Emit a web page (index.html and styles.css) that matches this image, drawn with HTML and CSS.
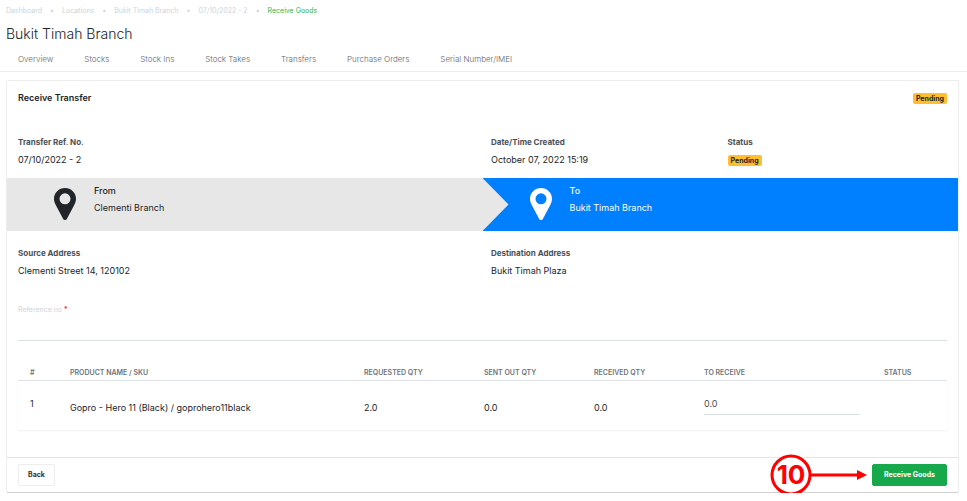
FILE: index.html
```
<!DOCTYPE html>
<html lang="en">
<head>
  <meta charset="UTF-8" />
  <meta name="viewport" content="width=device-width, initial-scale=1.0"/>
  <title>Receive Goods - Bukit Timah Branch</title>
  <link rel="stylesheet" href="styles.css">
</head>
<body>
  <header class="page-header">
    <nav class="breadcrumb" aria-label="Breadcrumb">
      <a href="#">Dashboard</a>
      <a href="#">Locations</a>
      <a href="#">Bukit Timah Branch</a>
      <a href="#">07/10/2022 - 2</a>
      <a href="#" class="active">Receive Goods</a>
    </nav>
    <h1>Bukit Timah Branch</h1>
    <nav class="tabs" aria-label="Location">
      <a href="#">Overview</a>
      <a href="#">Stocks</a>
      <a href="#">Stock Ins</a>
      <a href="#">Stock Takes</a>
      <a href="#">Transfers</a>
      <a href="#">Purchase Orders</a>
      <a href="#">Serial Number/IMEI</a>
    </nav>
  </header>

  <main class="card">
    <div class="card-header">
      <h2>Receive Transfer</h2>
      <span class="badge">Pending</span>
    </div>

    <!-- Transfer details -->
    <div class="details">
      <div class="field wide">
        <h3>Transfer Ref. No.</h3>
        <p>07/10/2022 - 2</p>
      </div>
      <div class="field">
        <h3>Date/Time Created</h3>
        <p>October 07, 2022 15:19</p>
      </div>
      <div class="field">
        <h3>Status</h3>
        <p><span class="badge">Pending</span></p>
      </div>
    </div>

    <!-- From / To banner -->
    <div class="route">
      <div class="stop from">
        <svg class="pin" viewBox="0 0 22 32" aria-hidden="true">
          <path fill="currentColor" fill-rule="evenodd" d="M11 0C4.900 0 0 4.800 0 10.800c0 2.500.8 4.500 2 6.700L9.300 31.200c.7 1.100 2.700 1.100 3.400 0L20 17.500c1.200-2.200 2-4.200 2-6.700C22 4.800 17.100 0 11 0zM11 5.300a5.500 5.500 0 1 1 0 11 5.500 5.500 0 0 1 0-11z"/>
        </svg>
        <div>
          <h3>From</h3>
          <p>Clementi Branch</p>
        </div>
      </div>
      <div class="stop to">
        <svg class="pin" viewBox="0 0 22 32" aria-hidden="true">
          <path fill="currentColor" fill-rule="evenodd" d="M11 0C4.900 0 0 4.800 0 10.800c0 2.500.8 4.500 2 6.700L9.300 31.200c.7 1.100 2.700 1.100 3.400 0L20 17.500c1.200-2.200 2-4.200 2-6.700C22 4.800 17.100 0 11 0zM11 5.300a5.500 5.500 0 1 1 0 11 5.500 5.500 0 0 1 0-11z"/>
        </svg>
        <div>
          <h3>To</h3>
          <p>Bukit Timah Branch</p>
        </div>
      </div>
    </div>

    <div class="details addresses">
      <div class="field wide">
        <h3>Source Address</h3>
        <p>Clementi Street 14, 120102</p>
      </div>
      <div class="field wide">
        <h3>Destination Address</h3>
        <p>Bukit Timah Plaza</p>
      </div>
    </div>

    <div class="reference">
      <label for="referenceNo">Reference no <span class="required">*</span></label>
      <input type="text" id="referenceNo" required />
    </div>

    <!-- Products -->
    <table class="products">
      <colgroup>
        <col class="col-index">
        <col class="col-name">
        <col class="col-requested">
        <col class="col-sent">
        <col class="col-received">
        <col class="col-receive">
        <col class="col-status">
      </colgroup>
      <thead>
        <tr>
          <th>#</th>
          <th>Product Name / SKU</th>
          <th>Requested Qty</th>
          <th>Sent Out Qty</th>
          <th>Received Qty</th>
          <th>To Receive</th>
          <th>Status</th>
        </tr>
      </thead>
      <tbody>
        <tr>
          <td class="top">1</td>
          <td>Gopro - Hero 11 (Black) / goprohero11black</td>
          <td>2.0</td>
          <td>0.0</td>
          <td>0.0</td>
          <td class="top"><input type="text" value="0.0" aria-label="To receive" /></td>
          <td></td>
        </tr>
      </tbody>
    </table>

    <div class="card-footer">
      <button type="button" class="btn btn-back">Back</button>
      <div class="submit">
        <svg class="callout" viewBox="0 0 98 42" role="img" aria-label="Step 10">
          <circle cx="21" cy="21" r="19" fill="#fff" stroke="#f00" stroke-width="3"/>
          <text class="callout-text" x="21" y="30" text-anchor="middle">10</text>
          <path d="M41 21h46" stroke="#f00" stroke-width="3"/>
          <path d="M87 16l10 5-10 5z" fill="#f00"/>
        </svg>
        <button type="submit" class="btn btn-success">Receive Goods</button>
      </div>
    </div>
  </main>
</body>
</html>
```
FILE: styles.css
```
* {
  box-sizing: border-box;
}
body {
  font-family: Inter, 'Liberation Sans', sans-serif;
  font-size: 9px;
  line-height: 14px;
  margin: 0;
  color: #212529;
  background-color: #fff;
}
h1, h2, h3, p {
  margin: 0;
}
a {
  text-decoration: none;
}
input {
  font: inherit;
  color: #495057;
  display: block;
  width: 100%;
  border: none;
  border-bottom: 1px solid #dadfe3;
  border-radius: 0;
  background: none;
  padding: 0;
}
.page-header {
  border-bottom: 1px solid #ededed;
}
.breadcrumb {
  display: flex;
  padding: 4px 6px 0;
  font-size: 7px;
}
.breadcrumb a {
  color: #ced4da;
}
.breadcrumb a + a::before {
  content: "•";
  margin: 0 8px;
  color: #ced4da;
}
.breadcrumb .active {
  color: #28b858;
}
h1 {
  padding: 6px 6px 0;
  font-size: 14px;
  line-height: 20px;
  font-weight: 300;
}
.tabs {
  display: flex;
  gap: 31px;
  padding: 8px 18px 5px;
  font-size: 8px;
  font-weight: 300;
}
.tabs a {
  color: #5c656d;
}
.card {
  margin: 8px 8px 0 6px;
  border: 1px solid #ededed;
  border-bottom: 1px solid #d0d0d0;
  border-radius: 2px;
}
.card-header {
  display: flex;
  justify-content: space-between;
  align-items: center;
  padding: 10px 11px 0;
}
h2 {
  font-size: 9px;
  font-weight: 600;
}
.badge {
  display: block;
  width: max-content;
  padding: 0 3px;
  font-size: 7px;
  line-height: 11px;
  font-weight: 700;
  background-color: #ffbe2e;
  border-radius: 2px;
}
.details {
  display: grid;
  grid-template-columns: repeat(4, 1fr);
  gap: 17px;
  padding: 30px 11px 11px;
}
.wide {
  grid-column: span 2;
}
.field h3 {
  font-size: 8px;
  font-weight: 700;
  color: #495057;
}
.field p {
  margin-top: 4px;
}
.field .badge {
  margin-top: 6px;
}
.route {
  display: flex;
  background-color: #e7e7e7;
}
.stop {
  flex: 1;
  display: flex;
  gap: 18px;
  padding: 6px 0 9px 47px;
}
.stop h3 {
  font-size: 9px;
  font-weight: 500;
}
.stop p {
  margin-top: 3px;
  padding-bottom: 7px;
}
.pin {
  width: 22px;
  height: 32px;
  margin-top: 4px;
}
.to {
  color: #fff;
  background-color: #007fff;
  clip-path: polygon(0 0, 100% 0, 100% 100%, 0 100%, 26px 50%);
}
.addresses {
  padding: 15px 11px 0;
}
.reference {
  margin: 25px 11px 0;
}
.reference label {
  display: block;
  font-size: 7px;
  color: #ced4da;
}
.reference input {
  height: 24px;
}
.required {
  color: #f00;
}
.products {
  width: calc(100% - 22px);
  margin: 23px 11px 27px;
  table-layout: fixed;
  border-collapse: collapse;
}
.col-index { width: 40px; }
.col-requested { width: 120px; }
.col-sent { width: 110px; }
.col-received { width: 110px; }
.col-receive { width: 180px; }
.col-status { width: 75px; }
.products th {
  padding: 2px 12px 0;
  font-size: 7px;
  font-weight: 600;
  text-align: left;
  text-transform: uppercase;
  color: #6c757d;
  border-bottom: 1px solid #dee2e6;
}
.products td {
  height: 49px;
  padding: 6px 12px 0;
}
.products .top {
  padding-top: 16px;
  vertical-align: top;
}
.products tbody tr {
  box-shadow: 0 1px 2px rgba(0,0,0,0.06);
}
.products input {
  height: 18px;
  padding-bottom: 4px;
}
.card-footer {
  display: flex;
  justify-content: space-between;
  padding: 6px 11px;
  border-top: 1px solid #e4e4e4;
}
.btn {
  padding: 3px 9px;
  font: 700 7px/14px Inter, 'Liberation Sans', sans-serif;
  border: 1px solid #eee;
  border-radius: 2px;
  cursor: pointer;
}
.btn-back {
  color: #333;
  background-color: #fff;
}
.btn-success {
  padding: 3px 11px;
  color: #fff;
  background-color: #18a84c;
  border-color: #18a84c;
}
.submit {
  position: relative;
}
/* step marker pointing at the submit button */
.callout {
  position: absolute;
  right: calc(100% + 4px);
  top: -10px;
  width: 98px;
  height: 42px;
}
.callout-text {
  font-size: 26px;
  font-weight: 700;
  fill: #f00;
}
```
